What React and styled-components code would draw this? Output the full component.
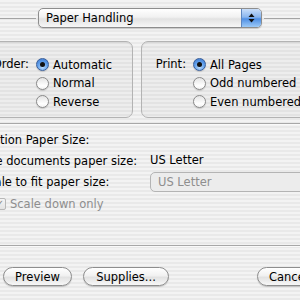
import React from "react";
import styled, { createGlobalStyle, css } from "styled-components";

const Global = createGlobalStyle`
  html, body {
    margin: 0;
    width: 300px;
    height: 300px;
    overflow: hidden;
  }
  body {
    font-family: "DejaVu Sans", "Liberation Sans", sans-serif;
    font-size: 11.5px;
    color: #000;
    background: repeating-linear-gradient(
      to bottom,
      #f3f3f3 0px,
      #f3f3f3 2px,
      #e9e9e9 2px,
      #e9e9e9 4px
    );
  }
`;

const Sheet = styled.div`
  width: 300px;
  height: 300px;
  display: flex;
  flex-direction: column;
`;

const Header = styled.div`
  display: flex;
  align-items: center;
  gap: 2px;
  margin-top: 8px;
  height: 20px;
`;

const Rule = styled.div`
  flex: 1;
  height: 0;
  border-top: 1px solid #a4a4a4;
`;

const aqua = css`
  background: linear-gradient(
    to bottom,
    #ffffff 0%,
    #f1f1f1 45%,
    #e2e2e2 55%,
    #f7f7f7 100%
  );
  border: 1px solid #8d8d8d;
  box-shadow: 0 1px 1px rgba(0, 0, 0, 0.18);
`;

const Popup = styled.div`
  ${aqua};
  box-sizing: border-box;
  width: ${(p) => p.$width || "224px"};
  height: 20px;
  border-radius: 5px;
  display: flex;
  align-items: center;
  overflow: hidden;
  color: ${(p) => (p.$disabled ? "#8e8e8e" : "#000")};
  ${(p) =>
    p.$disabled &&
    css`
      background: #ececec;
      border-color: #b4b4b4;
      box-shadow: none;
    `}
`;

const PopupLabel = styled.span`
  flex: 1;
  padding-left: 7px;
  white-space: nowrap;
`;

const PopupArrows = styled.div`
  width: 19px;
  align-self: stretch;
  display: flex;
  align-items: center;
  justify-content: center;
  border-left: 1px solid #5d86c0;
  background: linear-gradient(
    to bottom,
    #c9defa 0%,
    #8ab6ef 45%,
    #4f8fe4 55%,
    #9ccaf8 100%
  );
`;

const Groups = styled.div`
  display: flex;
  gap: 8px;
  margin-top: 13px;
  margin-left: -67px;
`;

const GroupBox = styled.div`
  box-sizing: border-box;
  width: ${(p) => p.$width};
  height: 77px;
  flex-shrink: 0;
  border: 1px solid #b3b3b3;
  border-radius: 7px;
  background: rgba(0, 0, 0, 0.025);
  box-shadow: inset 0 1px 1px rgba(0, 0, 0, 0.06);
  padding-top: 14px;
  display: grid;
  grid-template-columns: ${(p) => p.$labelCol} auto;
  column-gap: 7px;
  align-content: start;
`;

const FieldLabel = styled.div`
  text-align: right;
  white-space: nowrap;
  line-height: 17px;
`;

const Options = styled.div`
  display: flex;
  flex-direction: column;
  gap: 1.5px;
`;

const Option = styled.label`
  display: flex;
  align-items: center;
  gap: 4px;
  height: 17px;
  white-space: nowrap;
  color: ${(p) => (p.$disabled ? "#8e8e8e" : "#000")};
`;

const Radio = styled.span`
  box-sizing: border-box;
  width: 13px;
  height: 13px;
  border-radius: 50%;
  flex-shrink: 0;
  position: relative;
  border: 1px solid ${(p) => (p.$checked ? "#3a5f9a" : "#8a8a8a")};
  background: ${(p) =>
    p.$checked
      ? "radial-gradient(circle at 50% 75%, #b9dcff 0%, #5b9ae8 55%, #3d78cf 100%)"
      : "linear-gradient(to bottom, #e4e4e4 0%, #ffffff 70%, #f2f2f2 100%)"};
  box-shadow: 0 1px 1px rgba(0, 0, 0, 0.15);
  &::after {
    content: "";
    display: ${(p) => (p.$checked ? "block" : "none")};
    position: absolute;
    left: 3px;
    top: 3px;
    width: 5px;
    height: 5px;
    border-radius: 50%;
    background: #111;
  }
`;

const Checkbox = styled.span`
  box-sizing: border-box;
  width: 12px;
  height: 12px;
  border-radius: 2px;
  flex-shrink: 0;
  border: 1px solid #b8b8b8;
  background: linear-gradient(to bottom, #f4f4f4, #e4e4e4);
  display: flex;
  align-items: center;
  justify-content: center;
  color: #8a8a8a;
  font-size: 10px;
  line-height: 1;
`;

const Separator = styled.div`
  height: 0;
  border-top: 1px solid #a8a8a8;
  border-bottom: 1px solid #fafafa;
  margin-top: ${(p) => p.$top};
`;

const Section = styled.div`
  display: grid;
  grid-template-columns: 179px auto;
  column-gap: 7px;
  row-gap: 3px;
  margin-left: -36px;
  margin-top: 7px;
  align-items: center;
`;

const Heading = styled.div`
  grid-column: 1 / -1;
  margin-left: -8px;
  line-height: 17px;
  white-space: nowrap;
`;

const Value = styled.div`
  line-height: 17px;
  white-space: nowrap;
`;

const CheckRow = styled.div`
  grid-column: 1 / -1;
  padding-left: 30px;
`;

const ButtonRow = styled.div`
  display: flex;
  align-items: center;
  margin-top: 20px;
  padding-left: 3px;
  gap: 11px;
`;

const Button = styled.button`
  ${aqua};
  font: inherit;
  color: #000;
  height: 19px;
  width: ${(p) => p.$width};
  border-radius: 10px;
  padding: 0;
  flex-shrink: 0;
  margin-left: ${(p) => p.$push || 0};
  text-align: ${(p) => (p.$left ? "left" : "center")};
  padding-left: ${(p) => (p.$left ? "11px" : "0")};
`;

const Arrows = () => (
  <svg width="7" height="10" viewBox="0 0 7 10">
    <path d="M3.5 0.5 L6.5 4 L0.5 4 Z" fill="#111" />
    <path d="M3.5 9.5 L6.5 6 L0.5 6 Z" fill="#111" />
  </svg>
);

export default function App() {
  return (
    <Sheet>
      <Global />
      <Header>
        <Rule />
        <Popup>
          <PopupLabel>Paper Handling</PopupLabel>
          <PopupArrows>
            <Arrows />
          </PopupArrows>
        </Popup>
        <Rule />
      </Header>

      <Groups>
        <GroupBox $width="200px" $labelCol="95px">
          <FieldLabel>Page Order:</FieldLabel>
          <Options>
            <Option>
              <Radio $checked />
              Automatic
            </Option>
            <Option>
              <Radio />
              Normal
            </Option>
            <Option>
              <Radio />
              Reverse
            </Option>
          </Options>
        </GroupBox>
        <GroupBox $width="220px" $labelCol="44px">
          <FieldLabel>Print:</FieldLabel>
          <Options>
            <Option>
              <Radio $checked />
              All Pages
            </Option>
            <Option>
              <Radio />
              Odd numbered pages
            </Option>
            <Option>
              <Radio />
              Even numbered pages
            </Option>
          </Options>
        </GroupBox>
      </Groups>

      <Separator $top="5px" />

      <Section>
        <Heading>Destination Paper Size:</Heading>
        <Option>
          <Radio />
          Use documents paper size:
        </Option>
        <Value>US Letter</Value>
        <Option>
          <Radio />
          Scale to fit paper size:
        </Option>
        <Popup $disabled $width="180px">
          <PopupLabel>US Letter</PopupLabel>
        </Popup>
        <CheckRow>
          <Option $disabled>
            <Checkbox>✓</Checkbox>
            Scale down only
          </Option>
        </CheckRow>
      </Section>

      <Separator $top="33px" />

      <ButtonRow>
        <Button $width="69px">Preview</Button>
        <Button $width="86px">Supplies...</Button>
        <Button $width="80px" $push="77px" $left>
          Cancel
        </Button>
      </ButtonRow>
    </Sheet>
  );
}
